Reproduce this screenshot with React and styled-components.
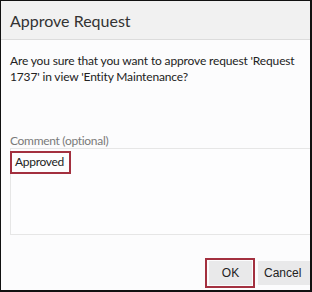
import React from "react";
import styled, { createGlobalStyle } from "styled-components";

const Global = createGlobalStyle`
  html, body { margin: 0; padding: 0; background: #fff; }
  body { font-family: Lato, "Open Sans", sans-serif; }
`;

const Frame = styled.div`
  width: 312px;
  height: 292px;
  box-sizing: border-box;
  border-style: solid;
  border-color: #111;
  border-width: 1px 2px 2px 1px;
  overflow: hidden;
  background: #fcfcfd;
`;

const Dialog = styled.div`
  width: 318px;
  display: flex;
  flex-direction: column;
`;

const Header = styled.div`
  height: 38px;
  background: #f1f1f1;
  border-bottom: 1px solid #dcdcdc;
  display: flex;
  align-items: center;
  padding-left: 9px;
  font-size: 16px;
  color: #333;
`;

const Body = styled.div`
  padding: 13px 0 0 9px;
  display: flex;
  flex-direction: column;
`;

const Message = styled.p`
  margin: 0;
  font-size: 12px;
  letter-spacing: -0.15px;
  line-height: 16px;
  color: #222;
  width: 292px;
`;

const Label = styled.div`
  margin-top: 49px;
  font-size: 12px;
  letter-spacing: -0.3px;
  line-height: 14px;
  color: #7a7a7a;
`;

const TextArea = styled.div`
  position: relative;
  box-sizing: border-box;
  height: 87px;
  border: 1px solid #e6e6e6;
  background: #fdfdfe;
  padding: 5px 0 0 4px;
  font-size: 12px;
  letter-spacing: -0.3px;
  line-height: 16px;
  color: #222;
`;

const Highlight = styled.div`
  position: absolute;
  left: ${(p) => p.$left}px;
  top: ${(p) => p.$top}px;
  width: ${(p) => p.$width}px;
  height: ${(p) => p.$height}px;
  border: 2px solid #a3303f;
  box-sizing: border-box;
  pointer-events: none;
`;

const Footer = styled.div`
  display: flex;
  justify-content: flex-end;
  gap: 6px;
  padding: 26px 6px 0 0;
`;

const ButtonSlot = styled.div`
  position: relative;
  display: flex;
`;

const Button = styled.button`
  box-sizing: border-box;
  height: 24px;
  width: ${(p) => p.$width}px;
  padding: 0 0 0 ${(p) => p.$padLeft}px;
  text-align: ${(p) => (p.$padLeft ? "left" : "center")};
  border: none;
  background: #e9e9ea;
  font-family: "Liberation Sans", Arial, sans-serif;
  font-size: 12px;
  color: #222;
`;

export default function App() {
  return (
    <>
      <Global />
      <Frame>
        <Dialog>
          <Header>Approve Request</Header>
          <Body>
            <Message>
              Are you sure that you want to approve request 'Request 1737' in view 'Entity Maintenance?
            </Message>
            <Label>Comment (optional)</Label>
            <TextArea>
              Approved
              <Highlight $left={-1} $top={2} $width={61} $height={23} />
            </TextArea>
          </Body>
          <Footer>
            <ButtonSlot>
              <Button $width={43}>OK</Button>
              <Highlight $left={-4} $top={-3} $width={50} $height={30} />
            </ButtonSlot>
            <Button $width={55} $padLeft={6}>Cancel</Button>
          </Footer>
        </Dialog>
      </Frame>
    </>
  );
}
